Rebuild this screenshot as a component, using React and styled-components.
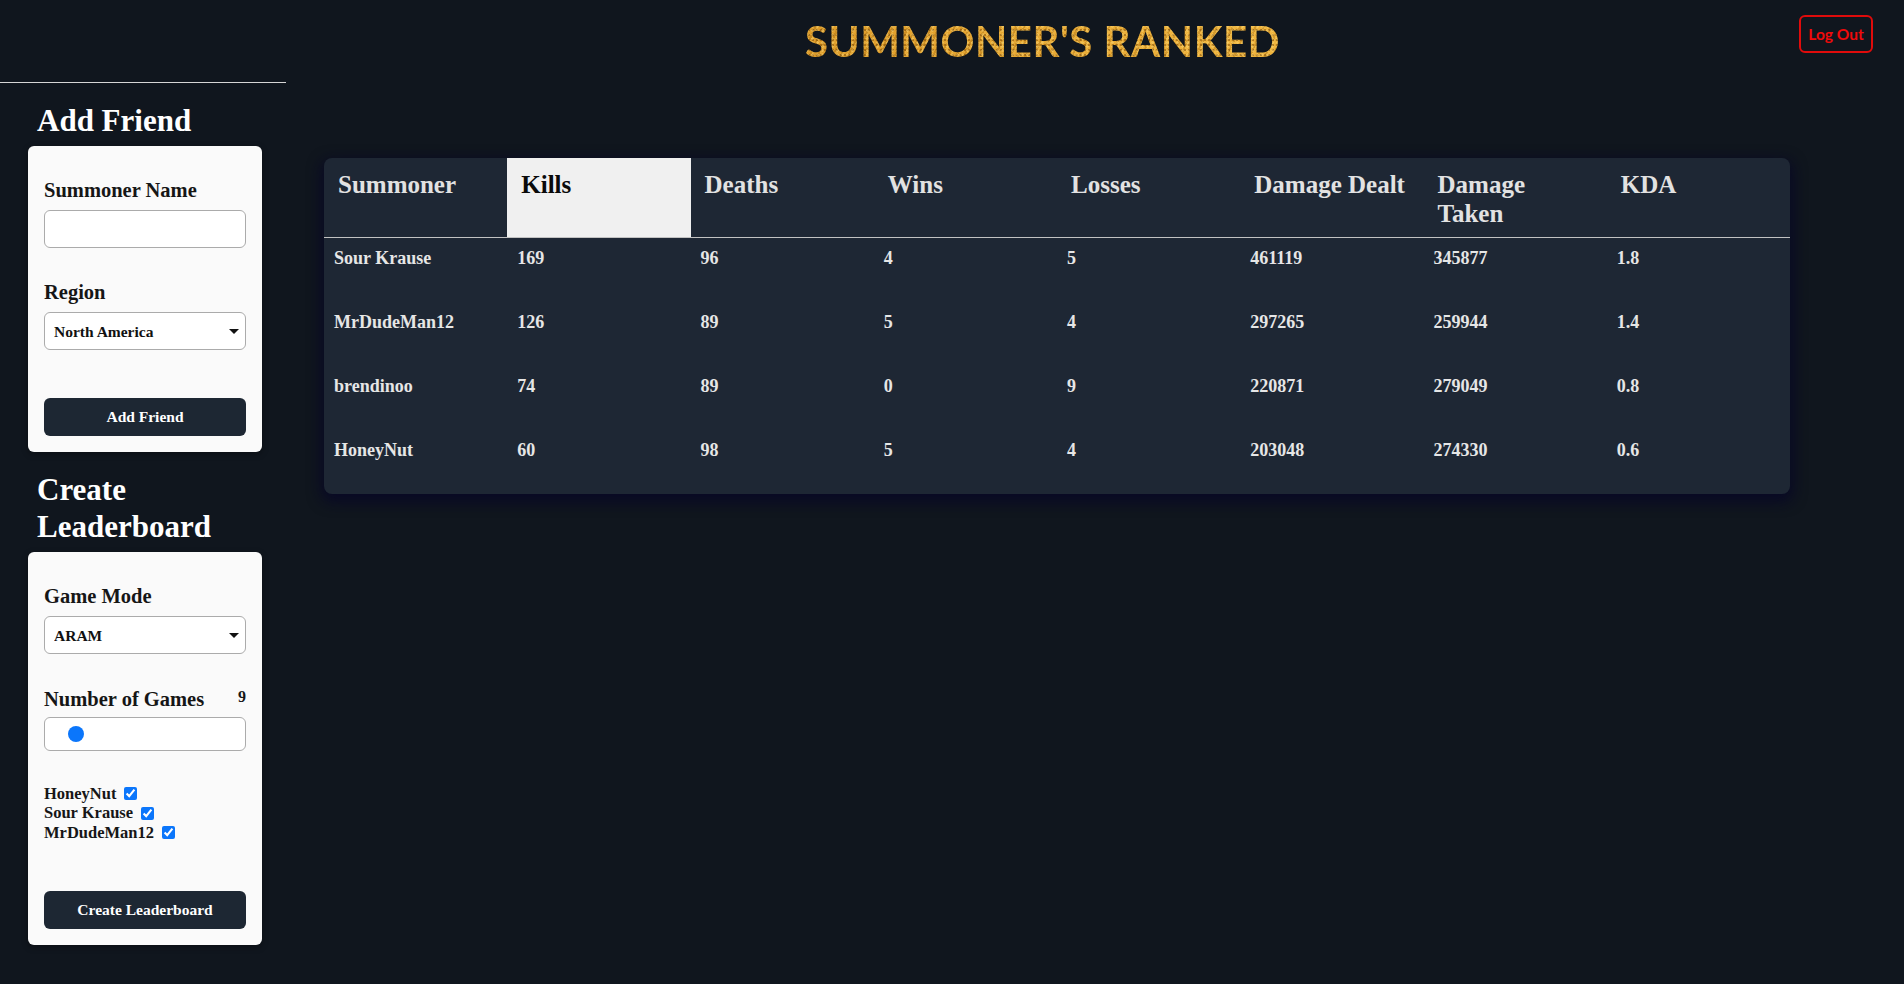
import React from 'react';
import styled, { createGlobalStyle } from 'styled-components';

const GlobalStyle = createGlobalStyle`
  html, body {
    margin: 0;
    padding: 0;
    background-color: #10161e;
    font-family: "Liberation Serif", "Times New Roman", serif;
  }
  #root {
    min-height: 100vh;
  }
  * {
    box-sizing: border-box;
  }
`;

const Page = styled('div')`
  display: flex;
  min-height: 100vh;
  background-color: #10161e;
`;

const Sidebar = styled('aside')`
  width: 286px;
  flex-shrink: 0;
`;

const SidebarTop = styled('div')`
  height: 83px;
  border-bottom: 1px solid #d6d6d6;
`;

const SidebarBody = styled('div')`
  padding: 0 24px 0 28px;
`;

const SectionTitle = styled('h2')`
  margin: 19px 0 7px;
  padding-left: 9px;
  font-size: 31px;
  line-height: 37px;
  font-weight: 700;
  color: #ffffff;
`;

const Card = styled('form')`
  background-color: #fafafa;
  border-radius: 6px;
  padding: 16px;
  box-shadow: 0 2px 6px rgba(0, 0, 0, 0.35);
  display: flex;
  flex-direction: column;
`;

const FieldLabel = styled('label')`
  display: block;
  margin-top: ${p => p.$gap || 17}px;
  font-size: 20.5px;
  line-height: 23px;
  font-weight: 700;
  color: #161616;
`;

const LabelRow = styled('div')`
  display: flex;
  justify-content: space-between;
  align-items: flex-start;
  margin-top: ${p => p.$gap || 17}px;
  font-size: 20.5px;
  line-height: 23px;
  font-weight: 700;
  color: #161616;
  .value {
    font-size: 16px;
    line-height: 18px;
  }
`;

const TextInput = styled('input')`
  display: block;
  width: 100%;
  height: 38px;
  margin-top: 8px;
  border: 1px solid #ababab;
  border-radius: 6px;
  background: #fff;
  font: inherit;
  padding: 0 9px;
  outline: none;
`;

const SelectWrap = styled('div')`
  position: relative;
  margin-top: 8px;
  &::after {
    content: '';
    position: absolute;
    right: 7px;
    top: 17px;
    border-left: 5px solid transparent;
    border-right: 5px solid transparent;
    border-top: 5px solid #111;
    pointer-events: none;
  }
`;

const Select = styled('select')`
  appearance: none;
  display: block;
  width: 100%;
  height: 38px;
  border: 1px solid #ababab;
  border-radius: 6px;
  background: #fff;
  padding: 0 9px;
  font-family: "Liberation Serif", serif;
  font-size: 15.5px;
  font-weight: 700;
  color: #111;
  outline: none;
`;

const RangeBox = styled('div')`
  margin-top: 6px;
  height: 34px;
  border: 1px solid #ababab;
  border-radius: 6px;
  background: #fff;
  padding: 0 10px;
  display: flex;
  align-items: center;
  input {
    appearance: none;
    -webkit-appearance: none;
    width: 100%;
    height: 16px;
    margin: 0;
    background: transparent;
    outline: none;
  }
  input::-webkit-slider-runnable-track {
    height: 16px;
    background: transparent;
  }
  input::-webkit-slider-thumb {
    -webkit-appearance: none;
    width: 16px;
    height: 16px;
    border-radius: 50%;
    background: #0b76fb;
    border: none;
  }
`;

const FriendList = styled('div')`
  margin-top: 33px;
  display: flex;
  flex-direction: column;
`;

const FriendCheck = styled('label')`
  display: flex;
  align-items: center;
  height: 19.5px;
  font-size: 16.5px;
  font-weight: 700;
  color: #161616;
  input {
    width: 13px;
    height: 13px;
    margin: 0 0 0 8px;
    accent-color: #0b76fb;
  }
`;

const SubmitButton = styled('button')`
  margin-top: 48px;
  height: 38px;
  width: 100%;
  border: none;
  border-radius: 6px;
  background-color: #1d2733;
  color: #ffffff;
  font-family: "Liberation Serif", serif;
  font-size: 15.5px;
  font-weight: 700;
  cursor: pointer;
`;

const Main = styled('main')`
  flex: 1;
  min-width: 0;
`;

const Header = styled('header')`
  display: flex;
  align-items: flex-start;
  padding: 15px 31px 0 0;
`;

const Title = styled('h1')`
  flex: 1;
  margin: 2px 0 0;
  text-align: center;
  font-family: Lato, "Open Sans", sans-serif;
  font-size: 42px;
  line-height: 48px;
  font-weight: 700;
  letter-spacing: 0.5px;
  background:
    radial-gradient(circle at 30% 40%, rgba(255, 230, 140, 0.35) 0 1px, transparent 1.5px) 0 0 / 5px 4px,
    radial-gradient(circle at 70% 60%, rgba(110, 60, 0, 0.45) 0 1px, transparent 1.5px) 0 0 / 4px 5px,
    repeating-linear-gradient(115deg, rgba(120, 70, 0, 0.22) 0 2px, rgba(255, 220, 120, 0.15) 2px 4px, transparent 4px 7px),
    linear-gradient(90deg, #c7841b 0%, #dc9a28 30%, #eeb13a 60%, #f6c248 100%);
  -webkit-background-clip: text;
  background-clip: text;
  color: transparent;
`;

const LogOutButton = styled('button')`
  width: 74px;
  height: 38px;
  border: 2px solid #e00b0b;
  border-radius: 6px;
  background: transparent;
  color: #f00a0a;
  font-family: Lato, sans-serif;
  font-size: 15.5px;
  font-weight: 700;
  cursor: pointer;
`;

const TableCard = styled('section')`
  margin: 93px 0 0 38px;
  width: 1466px;
  background-color: #1e2734;
  border-radius: 8px;
  overflow: hidden;
  box-shadow: 0 5px 14px 3px rgba(8, 8, 38, 0.9);
`;

const Table = styled('table')`
  width: 100%;
  table-layout: fixed;
  border-collapse: collapse;
`;

const HeadCell = styled('th')`
  text-align: left;
  vertical-align: top;
  padding: 12px 14px 9px;
  font-size: 25px;
  line-height: 29px;
  font-weight: 700;
  color: ${p => (p.$active ? '#0a0a0a' : '#e2e2e2')};
  background-color: ${p => (p.$active ? '#f0f0f0' : 'transparent')};
  border-bottom: 1px solid #c2c2c2;
`;

const Cell = styled('td')`
  vertical-align: top;
  padding: 10px 10px 33px;
  font-size: 18px;
  line-height: 21px;
  font-weight: 700;
  color: #e6e6e6;
`;

const columns = ['Summoner', 'Kills', 'Deaths', 'Wins', 'Losses', 'Damage Dealt', 'Damage Taken', 'KDA'];

const rows = [
  ['Sour Krause', 169, 96, 4, 5, 461119, 345877, '1.8'],
  ['MrDudeMan12', 126, 89, 5, 4, 297265, 259944, '1.4'],
  ['brendinoo', 74, 89, 0, 9, 220871, 279049, '0.8'],
  ['HoneyNut', 60, 98, 5, 4, 203048, 274330, '0.6'],
];

const friends = ['HoneyNut', 'Sour Krause', 'MrDudeMan12'];

const App = () => {
  return (
    <Page>
      <GlobalStyle />
      <Sidebar>
        <SidebarTop />
        <SidebarBody>
          <SectionTitle>Add Friend</SectionTitle>
          <Card onSubmit={e => e.preventDefault()}>
            <FieldLabel>Summoner Name</FieldLabel>
            <TextInput type="text" />
            <FieldLabel $gap={33}>Region</FieldLabel>
            <SelectWrap>
              <Select defaultValue="na">
                <option value="na">North America</option>
                <option value="euw">Europe West</option>
              </Select>
            </SelectWrap>
            <SubmitButton type="submit">Add Friend</SubmitButton>
          </Card>

          <SectionTitle>Create Leaderboard</SectionTitle>
          <Card onSubmit={e => e.preventDefault()}>
            <FieldLabel>Game Mode</FieldLabel>
            <SelectWrap>
              <Select defaultValue="aram">
                <option value="aram">ARAM</option>
                <option value="ranked">Ranked Solo</option>
              </Select>
            </SelectWrap>
            <LabelRow $gap={34}>
              <span>Number of Games</span>
              <span className="value">9</span>
            </LabelRow>
            <RangeBox>
              <input type="range" min="1" max="100" defaultValue="9" />
            </RangeBox>
            <FriendList>
              {friends.map(name => (
                <FriendCheck key={name}>
                  {name}
                  <input type="checkbox" defaultChecked />
                </FriendCheck>
              ))}
            </FriendList>
            <SubmitButton type="submit">Create Leaderboard</SubmitButton>
          </Card>
        </SidebarBody>
      </Sidebar>

      <Main>
        <Header>
          <Title>SUMMONER'S RANKED</Title>
          <LogOutButton>Log Out</LogOutButton>
        </Header>
        <TableCard>
          <Table>
            <thead>
              <tr>
                {columns.map(col => (
                  <HeadCell key={col} $active={col === 'Kills'}>{col}</HeadCell>
                ))}
              </tr>
            </thead>
            <tbody>
              {rows.map(row => (
                <tr key={row[0]}>
                  {row.map((val, i) => (
                    <Cell key={i}>{val}</Cell>
                  ))}
                </tr>
              ))}
            </tbody>
          </Table>
        </TableCard>
      </Main>
    </Page>
  );
};

export default App;
